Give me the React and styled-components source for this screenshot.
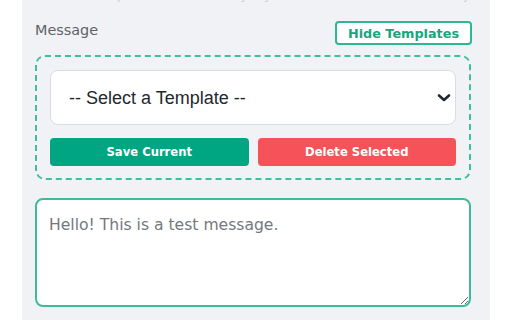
import React, { useState } from 'react';
import styled, { createGlobalStyle } from 'styled-components';

const GlobalStyle = createGlobalStyle`
  html, body {
    margin: 0;
    padding: 0;
    background: #ffffff;
    font-family: "DejaVu Sans", Verdana, sans-serif;
  }
`;

const Page = styled.div`
  padding-left: 22px;
  height: 320px;
  overflow: hidden;
`;

const Panel = styled.div`
  width: 436px;
  min-height: 340px;
  background: #f0f2f5;
  padding: 0 19px 0 13px;
  box-sizing: content-box;
`;

/* only the bottom of the previous line peeks in at the top edge */
const Hint = styled.div`
  height: 3px;
  display: flex;
  align-items: flex-end;
  overflow: hidden;
  padding-left: 60px;
  font-size: 11px;
  line-height: 12px;
  color: #c4c8ce;
  white-space: nowrap;
`;

const LabelRow = styled.div`
  display: flex;
  align-items: center;
  justify-content: space-between;
  margin-top: 18px;
  margin-bottom: 10px;
  height: 24px;
`;

const Label = styled.label`
  font-size: 14.4px;
  color: #5f6368;
  margin-top: -6px;
`;

const OutlineButton = styled.button`
  height: 24px;
  padding: 0 11px;
  margin-right: -1px;
  border: 2px solid #2bb892;
  border-radius: 4px;
  background: #ffffff;
  color: #16a67e;
  font-family: "DejaVu Sans", Verdana, sans-serif;
  font-weight: bold;
  font-size: 12.8px;
  cursor: pointer;
`;

const TemplateBox = styled.div`
  border: 2px dashed #3fbf9d;
  border-radius: 10px;
  padding: 13px 13px 12px;
  display: flex;
  flex-direction: column;
  gap: 13px;
  margin-bottom: 18px;
`;

const SelectWrap = styled.div`
  position: relative;
`;

const Select = styled.select`
  width: 100%;
  height: 55px;
  appearance: none;
  border: 1px solid #d9dde3;
  border-radius: 8px;
  background: #ffffff;
  padding: 0 18px;
  font-family: "Liberation Sans", Arial, sans-serif;
  font-size: 18px;
  color: #23272e;
  outline: none;
`;

const Chevron = styled.svg`
  position: absolute;
  right: 5px;
  top: 23px;
  pointer-events: none;
`;

const ButtonRow = styled.div`
  display: grid;
  grid-template-columns: 1fr 1fr;
  gap: 9px;
`;

const ActionButton = styled.button`
  height: 28px;
  border: none;
  border-radius: 4px;
  background: ${({ $danger }) => ($danger ? '#f65259' : '#00a681')};
  color: #ffffff;
  font-family: "DejaVu Sans", Verdana, sans-serif;
  font-weight: bold;
  font-size: 11.6px;
  cursor: pointer;
`;

const MessageArea = styled.textarea`
  display: block;
  width: 100%;
  height: 109px;
  box-sizing: border-box;
  border: 2px solid #3dbb9c;
  border-radius: 8px;
  padding: 16px 12px;
  font-family: "DejaVu Sans", Verdana, sans-serif;
  font-size: 15.6px;
  color: #74787d;
  background: #ffffff;
  outline: none;
`;

const TEMPLATES = ['Welcome message', 'Follow-up', 'Reminder'];

export default function App() {
  const [template, setTemplate] = useState('');
  const [message, setMessage] = useState('Hello! This is a test message.');

  return (
    <>
      <GlobalStyle />
      <Page>
        <Panel>
          <Hint>Templates are saved locally in your browser and are available every time.</Hint>
          <LabelRow>
            <Label>Message</Label>
            <OutlineButton>Hide Templates</OutlineButton>
          </LabelRow>

          <TemplateBox>
            <SelectWrap>
              <Select value={template} onChange={(e) => setTemplate(e.target.value)}>
                <option value="">-- Select a Template --</option>
                {TEMPLATES.map((t) => (
                  <option key={t} value={t}>{t}</option>
                ))}
              </Select>
              <Chevron width="14" height="10" viewBox="0 0 14 10">
                <path d="M2 2.5 L7 7 L12 2.5" fill="none" stroke="#23272e" strokeWidth="2.6" strokeLinecap="round" strokeLinejoin="round" />
              </Chevron>
            </SelectWrap>
            <ButtonRow>
              <ActionButton>Save Current</ActionButton>
              <ActionButton $danger>Delete Selected</ActionButton>
            </ButtonRow>
          </TemplateBox>

          <MessageArea value={message} onChange={(e) => setMessage(e.target.value)} />
        </Panel>
      </Page>
    </>
  );
}
